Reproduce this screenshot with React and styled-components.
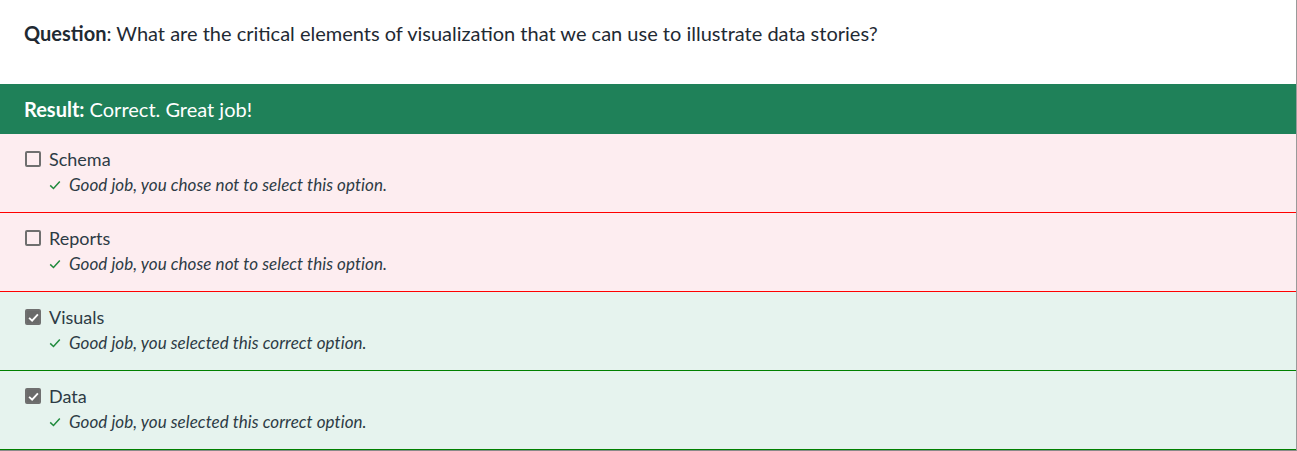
import styled, { createGlobalStyle } from "styled-components";

const GlobalStyle = createGlobalStyle`
  body {
    margin: 0;
    background: #fff;
    font-family: Lato, "Noto Sans", sans-serif;
    color: #2d3b45;
  }
`;

const Container = styled.div`
  width: 1296px;
  height: 450px;
  border-right: 1px solid #9a9a9a;
  border-bottom: 1px solid #8a8a8a;
  overflow: hidden;
`;

const Question = styled.div`
  height: 84px;
  padding: 21px 24px 0;
  box-sizing: border-box;
  font-size: 20px;
  line-height: 24px;
  color: #1f2a33;
`;

const Result = styled.div`
  height: 50px;
  background: #1f8159;
  color: #fff;
  font-size: 20px;
  display: flex;
  align-items: center;
  padding: 0 24px 1px;
  box-sizing: border-box;
`;

const Option = styled.div`
  height: 79px;
  box-sizing: border-box;
  padding: 14px 24px 0;
  background: ${(p) => (p.correct ? "#e6f3ee" : "#fdedf0")};
  border-bottom: 1px solid ${(p) => (p.correct ? "#008000" : "#ff0000")};
`;

const LabelRow = styled.div`
  display: flex;
  align-items: center;
  gap: 8px;
  font-size: 18px;
  color: #2d3b45;
  height: 22px;
`;

const Box = styled.span`
  width: 16px;
  height: 16px;
  margin-left: 1px;
  box-sizing: border-box;
  border: 2px solid #6f6f6f;
  border-radius: 2px;
  background: ${(p) => (p.checked ? "#6a6a6a" : "transparent")};
  display: flex;
  align-items: center;
  justify-content: center;
`;

const Feedback = styled.div`
  display: flex;
  align-items: center;
  gap: 8px;
  margin: 4px 0 0 25px;
  font-size: 17px;
  line-height: 22px;
  font-style: italic;
  letter-spacing: 0.06px;
  color: #2d3b45;
`;

const Tick = ({ color, size = 12, width = 1.5 }) => (
  <svg width={size} height={size} viewBox="0 0 12 12">
    <path d="M1.2 6.4 L4.5 9.5 L10.8 2.6" fill="none" stroke={color} strokeWidth={width} />
  </svg>
);

const options = [
  { label: "Schema", checked: false, correct: false, text: "Good job, you chose not to select this option." },
  { label: "Reports", checked: false, correct: false, text: "Good job, you chose not to select this option." },
  { label: "Visuals", checked: true, correct: true, text: "Good job, you selected this correct option." },
  { label: "Data", checked: true, correct: true, text: "Good job, you selected this correct option." },
];

export default function App() {
  return (
    <>
      <GlobalStyle />
      <Container>
        <Question>
          <b>Question</b>: What are the critical elements of visualization that we can use to illustrate data stories?
        </Question>
        <Result>
          <b>Result:</b>&nbsp;Correct. Great job!
        </Result>
        {options.map((o) => (
          <Option key={o.label} correct={o.correct}>
            <LabelRow>
              <Box checked={o.checked}>{o.checked && <Tick color="#fff" size={11} width={2} />}</Box>
              {o.label}
            </LabelRow>
            <Feedback>
              <Tick color="#1f8a3c" />
              {o.text}
            </Feedback>
          </Option>
        ))}
      </Container>
    </>
  );
}
